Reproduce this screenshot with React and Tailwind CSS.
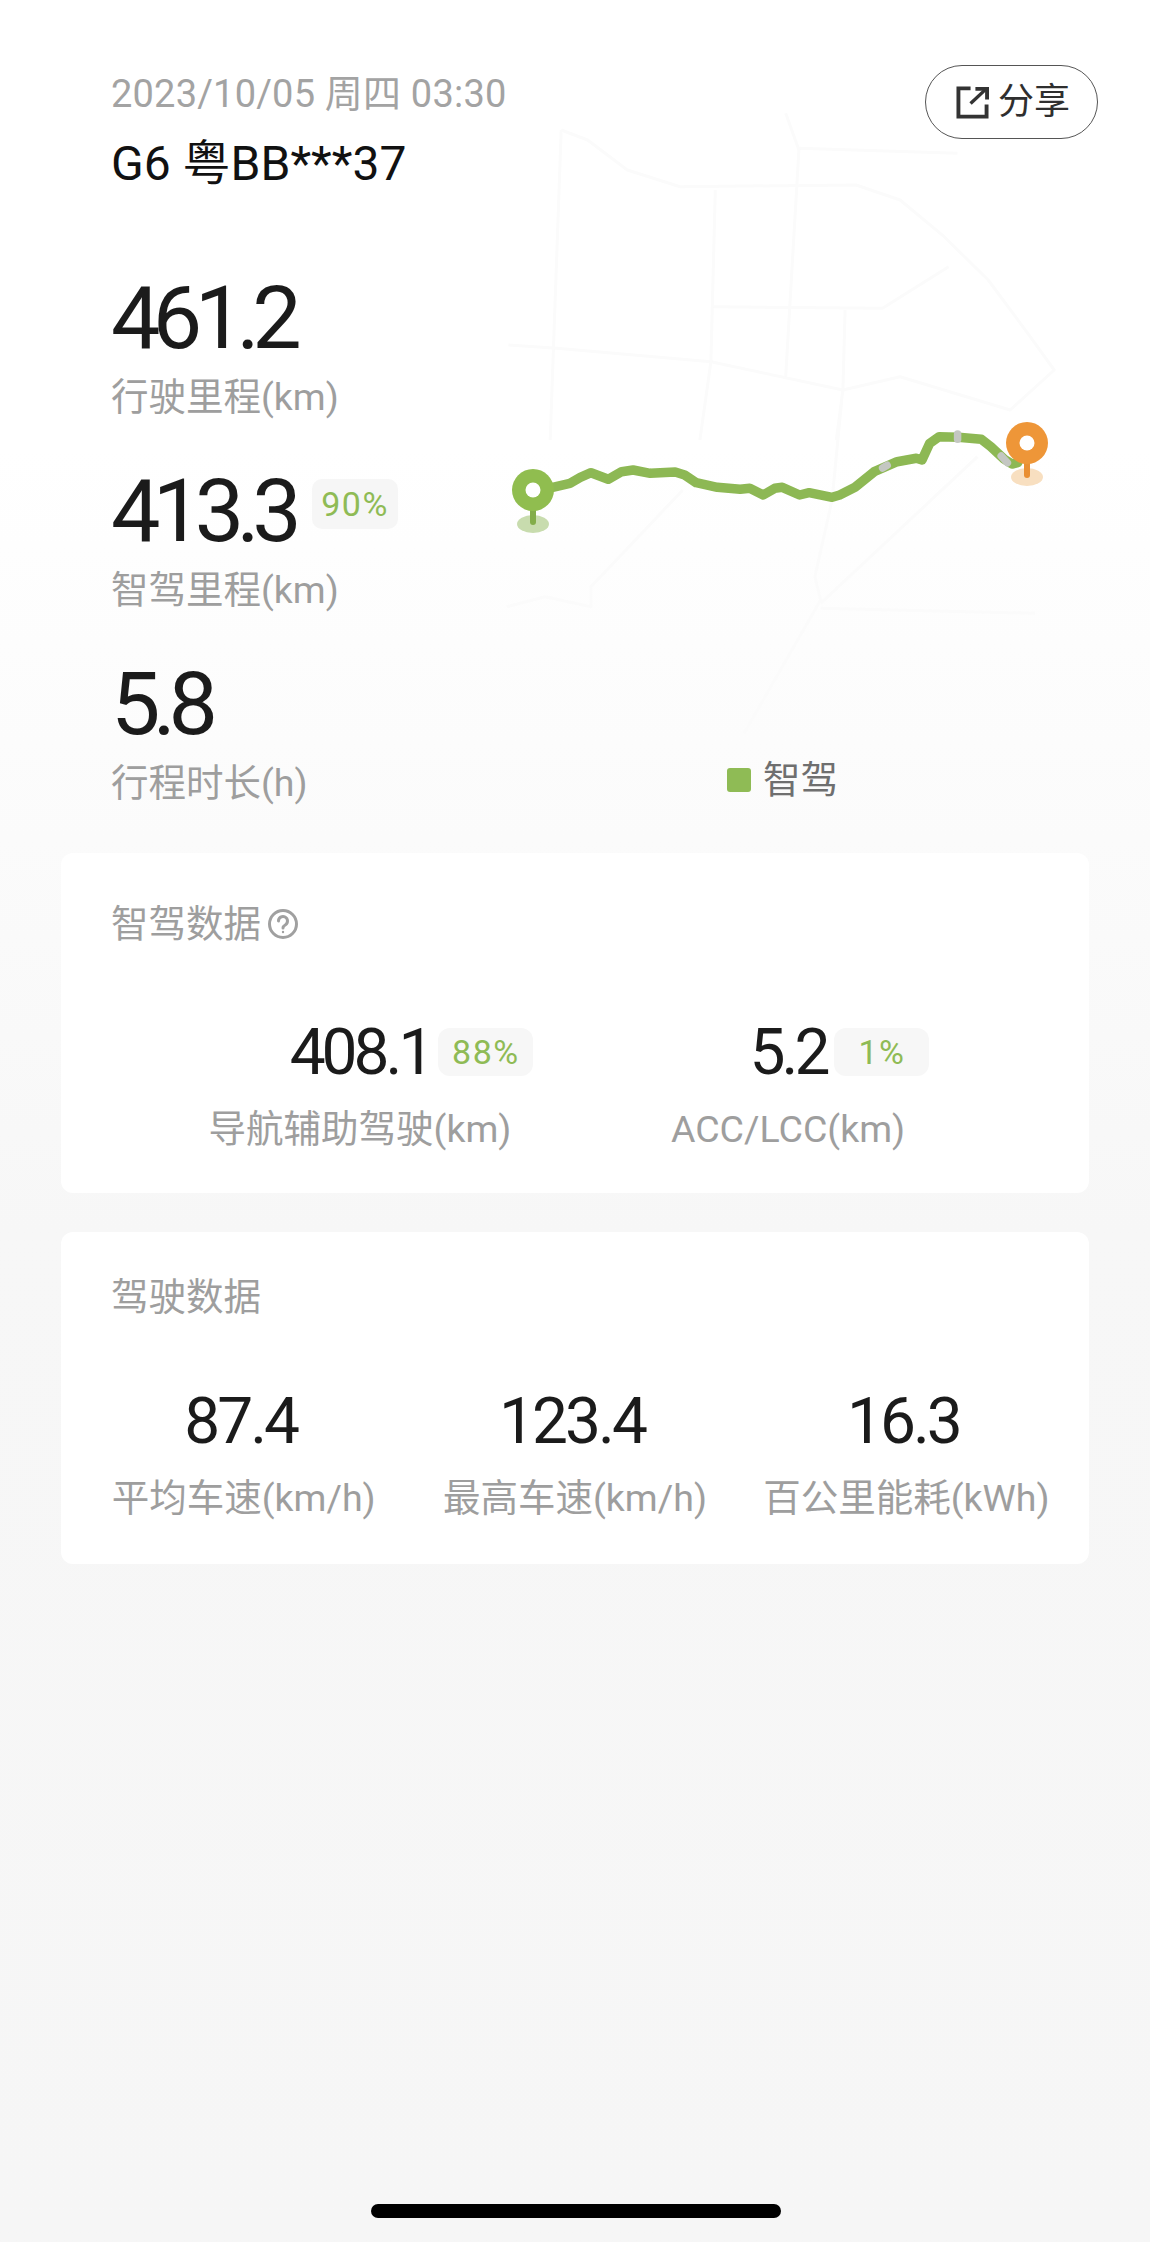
const pts = (ox, oy, sx, sy, arr) => arr.map(([x, y]) => `${(ox + x / sx).toFixed(1)},${(oy + y / sy).toFixed(1)}`).join(' ');

const route = pts(480, 400, 2.613, 3, [[170,265],[190,262],[235,250],[262,232],[290,218],[335,238],[370,215],[400,210],[445,220],[510,216],[535,225],[565,248],[620,262],[680,268],[705,265],[740,285],[770,265],[790,262],[835,285],[860,278],[920,292],[940,285],[980,262],[1030,215],[1060,200],[1090,185],[1140,175],[1155,180],[1175,130],[1200,110],[1250,112],[1310,118],[1335,140],[1370,178],[1390,192],[1405,188]]);
const grey = [
  pts(480, 400, 2.613, 3, [[1052,204],[1064,196]]),
  pts(480, 400, 2.613, 3, [[1248,102],[1248,118]]),
  pts(480, 400, 2.613, 3, [[1362,168],[1378,188]]),
];
const roads = [
  pts(460, 40, 2.272, 3, [[230,270],[205,1200]]),
  pts(460, 40, 2.272, 3, [[230,270],[290,300],[380,390],[500,440],[900,435],[1000,480],[1100,590],[1200,720],[1290,880],[1350,990],[1250,1110],[1000,1010],[870,1050],[570,965],[220,925],[110,915]]),
  pts(460, 40, 2.272, 3, [[740,220],[770,330],[740,1010]]),
  pts(460, 40, 2.272, 3, [[770,325],[1130,340]]),
  pts(460, 40, 2.272, 3, [[580,450],[570,965],[545,1200]]),
  pts(460, 40, 2.272, 3, [[575,800],[960,805],[1110,680]]),
  pts(460, 40, 2.272, 3, [[875,810],[870,1050],[855,1200]]),
  pts(480, 400, 2.613, 3, [[945,0],[920,300],[875,530],[890,600],[690,1000]]),
  pts(480, 400, 2.613, 3, [[530,270],[290,560],[290,620],[170,590],[70,620]]),
  pts(480, 400, 2.613, 3, [[1300,170],[890,610]]),
  pts(480, 400, 2.613, 3, [[890,625],[1450,640]]),
];

function Pin({ cx, cy, color, stem, shadow }) {
  return (
    <g>
      <ellipse cx={cx} cy={cy + 34} rx="16" ry="9" fill={shadow} />
      <rect x={cx - 3} y={cy + 15} width="6" height="20" rx="3" fill={stem} />
      <circle cx={cx} cy={cy} r="21" fill={color} />
      <circle cx={cx} cy={cy} r="7.5" fill="#ffffff" />
    </g>
  );
}

function MapDrawing() {
  return (
    <svg className="absolute left-0 top-0 h-[853px] w-[1150px] blur-[0.6px]" viewBox="0 0 1150 853" fill="none">
      {roads.map((p, i) => (
        <polyline key={i} points={p} stroke="#fbfbfb" strokeWidth="3" strokeLinejoin="round" />
      ))}
      <polyline points={route} stroke="#8db854" strokeWidth="9.5" strokeLinejoin="round" strokeLinecap="round" />
      {grey.map((p, i) => (
        <polyline key={i} points={p} stroke="#c4c7c2" strokeWidth="7.5" strokeLinecap="round" />
      ))}
      <Pin cx={533} cy={490} color="#90bd4f" stem="#83ad4a" shadow="#c8dcae" />
      <Pin cx={1027} cy={443} color="#ee9638" stem="#e98f33" shadow="#f8dfc0" />
    </svg>
  );
}

function Stat({ value, label, badge }) {
  return (
    <div className="h-[193px]">
      <div className="relative w-fit text-[88px] leading-[92px] tracking-[-7.6px] text-[#1b1b1b]">
        {value}
        {badge && (
          <span className="absolute left-[201px] top-[14px] flex h-[50px] w-[86px] items-center justify-center rounded-[10px] bg-[#f6f6f6] text-[34px] leading-none tracking-[1.5px] text-[#8fbb55]">
            {badge}
          </span>
        )}
      </div>
      <div className="mt-[8px] text-[37.5px] leading-[50px] text-[#9e9e9e]">{label}</div>
    </div>
  );
}

function AssistStat({ value, badge, label }) {
  return (
    <div className="flex flex-col items-center">
      <div className="relative text-[64px] leading-[70px] tracking-[-4px] text-[#1b1b1b]">
        {value}
        <span className="absolute left-[calc(100%+8px)] top-[10px] flex h-[48px] min-w-[95px] items-center justify-center rounded-[12px] bg-[#f7f7f7] text-[34px] leading-none tracking-[1.5px] text-[#8fbb55]">
          {badge}
        </span>
      </div>
      <div className="mt-[16px] whitespace-nowrap text-[37.5px] leading-[50px] text-[#9e9e9e]">{label}</div>
    </div>
  );
}

function DriveStat({ value, label }) {
  return (
    <div className="flex flex-col items-center">
      <div className="-translate-x-[3px] text-[64px] leading-[70px] tracking-[-3px] text-[#1b1b1b]">{value}</div>
      <div className="mt-[16px] whitespace-nowrap text-[37.5px] leading-[50px] text-[#9e9e9e]">{label}</div>
    </div>
  );
}

export default function App() {
  return (
    <div className="relative h-[2242px] w-[1150px] overflow-hidden bg-linear-to-b from-white from-[20%] via-[#f7f7f7] via-[55%] to-[#f6f6f6] font-[Roboto,'Noto_Sans_CJK_SC',sans-serif]">
      <section className="relative h-[853px]">
        <MapDrawing />
        <div className="relative flex pl-[111px] pr-[52px]">
          <div className="w-[616px] pt-[70px]">
            <div className="text-[38px] leading-[48px] tracking-[0.2px] text-[#a3a3a3]">2023/10/05 周四 03:30</div>
            <div className="mt-[18px] text-[48px] leading-[56px] text-[#111111]">G6 粤BB***37</div>
            <div className="mt-[80px]">
              <Stat value="461.2" label="行驶里程(km)" />
              <Stat value="413.3" label="智驾里程(km)" badge="90%" />
              <Stat value="5.8" label="行程时长(h)" />
            </div>
          </div>
          <div className="flex h-[807px] flex-1 flex-col">
            <button className="mt-[65px] flex h-[74px] w-[173px] items-center justify-center gap-[9px] self-end rounded-full border-[1.5px] border-[#555555] pl-[3px] text-[36px] leading-none text-[#2f2f2f]">
              <svg width="33" height="33" viewBox="0 0 34 34" fill="none" stroke="#333333" strokeWidth="4">
                <path d="M15 2.5H2.5V31.5H31.5V19" />
                <path d="M15 18L30 4" strokeWidth="3.5" />
                <path d="M20 3H32V14" />
              </svg>
              <span>分享</span>
            </button>
            <div className="mt-auto mb-[2px] flex items-center gap-[12px]">
              <span className="h-[24px] w-[24px] rounded-[3px] bg-[#8fbb55]" />
              <span className="text-[37.5px] leading-[50px] text-[#6f6f6f]">智驾</span>
            </div>
          </div>
        </div>
      </section>

      <section className="mx-[61px] h-[340px] rounded-[12px] bg-white">
        <div className="flex items-center gap-[6px] pl-[50px] pt-[46px]">
          <span className="text-[37.5px] leading-[50px] text-[#9e9e9e]">智驾数据</span>
          <svg width="32" height="32" viewBox="0 0 32 32" fill="none" stroke="#a0a0a0" strokeWidth="3">
            <circle cx="16" cy="16" r="13.5" />
            <path d="M11.5 13a4.5 4.5 0 1 1 7 3.7c-1.6 1-2.5 1.8-2.5 3.3" strokeLinecap="round" />
            <circle cx="16" cy="24" r="1.2" fill="#a0a0a0" stroke="none" />
          </svg>
        </div>
        <div className="mt-[69px] grid grid-cols-2 pl-[85px] pr-[87px]">
          <AssistStat value="408.1" badge="88%" label="导航辅助驾驶(km)" />
          <AssistStat value="5.2" badge="1%" label="ACC/LCC(km)" />
        </div>
      </section>

      <section className="mx-[61px] mt-[39px] h-[332px] rounded-[12px] bg-white">
        <div className="pl-[50px] pt-[40px] text-[37.5px] leading-[50px] text-[#9e9e9e]">驾驶数据</div>
        <div className="mt-[65px] grid grid-cols-3 px-[17px]">
          <DriveStat value="87.4" label="平均车速(km/h)" />
          <DriveStat value="123.4" label="最高车速(km/h)" />
          <DriveStat value="16.3" label="百公里能耗(kWh)" />
        </div>
      </section>

      <div className="absolute bottom-[24px] left-[371px] h-[14px] w-[410px] rounded-full bg-black" />
    </div>
  );
}
